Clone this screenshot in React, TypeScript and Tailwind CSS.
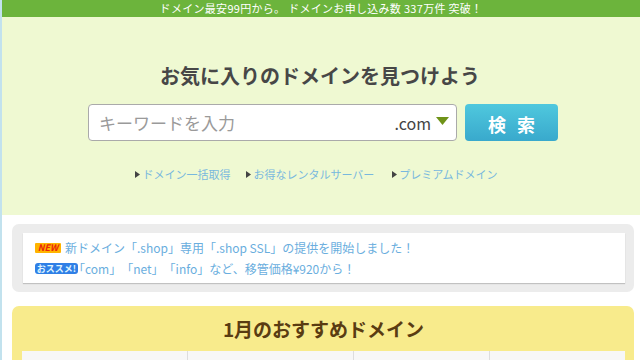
import React from "react";

const font = { fontFamily: '"Noto Sans CJK JP", "Noto Sans", sans-serif' };

function Bullet() {
  return (
    <svg width="5" height="7" viewBox="0 0 5 7" className="mr-[2px] shrink-0">
      <path d="M0 0 L5 3.5 L0 7 Z" fill="#444" />
    </svg>
  );
}

export default function App() {
  return (
    <div
      className="w-[640px] h-[360px] overflow-hidden bg-white flex [text-spacing-trim:space-all]"
      style={font}
    >
      <div className="w-[2px] shrink-0 bg-[#c2e2ee]" />
      <div className="flex-1 flex flex-col">
        {/* top bar */}
        <div className="h-[17px] shrink-0 bg-[#6cb43c] flex items-center justify-center text-white text-[11px] leading-[17px] tracking-[0.3px]">
          ドメイン最安99円から。 ドメインお申し込み数 337万件 突破！
        </div>

        {/* search section */}
        <div className="h-[198px] shrink-0 bg-[#eff9d2] flex flex-col items-center pt-[45px]">
          <h1 className="text-[20px] leading-[28px] font-bold text-[#474747] ml-[-2px]">
            お気に入りのドメインを見つけよう
          </h1>
          <div className="mt-[14px] flex items-center gap-[8px] ml-[4px]">
            <div className="w-[369px] h-[37px] bg-white border border-[#aaa] rounded-[4px] flex items-center pl-[10px] pr-[7px]">
              <input
                className="flex-1 min-w-0 bg-transparent outline-none text-[17px] text-[#333] placeholder:text-[#9a9a9a]"
                placeholder="キーワードを入力"
                style={font}
              />
              <span className="text-[16px] text-[#444] leading-none">.com</span>
              <svg width="13" height="8" viewBox="0 0 13 8" className="ml-[5px] mt-[-3px]">
                <path d="M0 0 L13 0 L6.5 8 Z" fill="#6f9318" />
              </svg>
            </div>
            <button className="w-[93px] h-[37px] rounded-[4px] bg-gradient-to-b from-[#4fc8de] to-[#39a9cc] text-white text-[18px] font-bold flex items-center justify-center gap-[11px] pt-[3px]">
              <span>検</span>
              <span>索</span>
            </button>
          </div>
          <div className="mt-[25px] flex items-center text-[11px] leading-[16px] text-[#78b8de] ml-[-9px]">
            <span className="flex items-center">
              <Bullet />
              ドメイン一括取得
            </span>
            <span className="flex items-center ml-[16px]">
              <Bullet />
              お得なレンタルサーバー
            </span>
            <span className="flex items-center ml-[18px]">
              <Bullet />
              プレミアムドメイン
            </span>
          </div>
        </div>

        {/* notice */}
        <div className="shrink-0 mt-[9px] ml-[10px] mr-[6px] h-[68px] bg-[#ececec] rounded-[7px] pl-[11px] pr-[9px] py-[9px]">
          <div className="h-[50px] bg-white shadow-[0_1px_1px_rgba(0,0,0,0.18)] pl-[12px] pt-[4px] text-[12px] leading-[21px] text-[#6aaede]">
            <div className="flex items-center">
              <span className="w-[26px] h-[10px] bg-[#ffb400] text-[#e8260a] text-[9px] font-bold leading-[10px] text-center rounded-[1px] mr-[4px] italic">
                NEW
              </span>
              新ドメイン「.shop」専用「.shop SSL」の提供を開始しました！
            </div>
            <div className="flex items-center">
              <span className="w-[43px] h-[11px] bg-[#2f7fe6] text-[#dff3ff] text-[9px] font-bold leading-[11px] text-center rounded-[3px] mr-[-5px]">
                おススメ!
              </span>
              「com」「net」「info」など、移管価格¥920から！
            </div>
          </div>
        </div>

        {/* recommended */}
        <div className="shrink-0 mt-[14px] ml-[10px] mr-[6px] bg-[#f8eb8c] rounded-t-[7px] pl-[10px] pr-[9px] pt-[10px]">
          <h2 className="text-center text-[19px] leading-[26px] font-bold text-[#5a3c12]">
            1月のおすすめドメイン
          </h2>
          <div className="mt-[9px] grid grid-cols-[166px_166px_136px_1fr] h-[40px] bg-[#f7f7f7]">
            <div className="border-r border-[#ddd]" />
            <div className="border-r border-[#ddd]" />
            <div className="border-r border-[#ddd]" />
            <div />
          </div>
        </div>
      </div>
    </div>
  );
}
